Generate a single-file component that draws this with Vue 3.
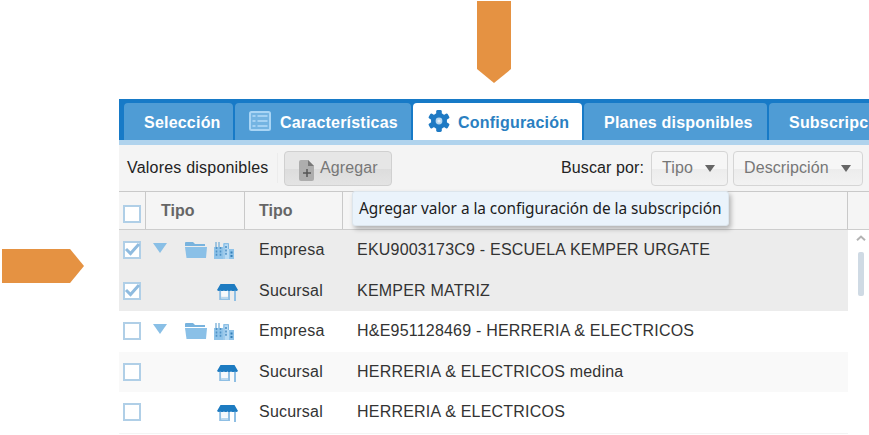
<template>
  <div class="page">
    <div class="arrow arrow-down"></div>
    <div class="arrow arrow-right"></div>

    <div class="panel">
      <nav class="tabs">
        <a v-for="tab in tabs" :key="tab.id" class="tab" :class="[tab.id, { active: tab.id === activeTab }]" @click="activeTab = tab.id">
          <svg v-if="tab.icon === 'list'" class="icon-list" viewBox="0 0 22 20">
            <rect x="1" y="1" width="20" height="18" rx="1.5" fill="#74b4e2" stroke="#a9d5f5" stroke-width="2" />
            <path d="M3.5 5H6.5M3.5 10H6.5M3.5 15H6.5M8.5 5H18.5M8.5 10H18.5M8.5 15H18.5" stroke="#a5d2f3" stroke-width="2" />
          </svg>
          <svg v-if="tab.icon === 'gear'" class="icon-gear" viewBox="0 0 22 22">
            <g fill="#1e7ac4">
              <circle cx="11" cy="11" r="8" />
              <rect v-for="n in 6" :key="n" x="8.2" y="0" width="5.6" height="6" rx="1.4" :transform="`rotate(${n * 60} 11 11)`" />
            </g>
            <circle cx="11" cy="11" r="3.4" fill="#b5d7f1" />
            <circle cx="11" cy="11" r="1.6" fill="#e3f0fa" />
          </svg>
          <span>{{ tab.label }}</span>
        </a>
      </nav>

      <div class="toolbar">
        <span class="toolbar-title">Valores disponibles</span>
        <button class="btn btn-add">
          <svg class="icon-add" viewBox="0 0 15 21">
            <path d="M0 2Q0 0 2 0H9L15 6V19Q15 21 13 21H2Q0 21 0 19Z" fill="#adadad" />
            <path d="M9 0L15 6H9Z" fill="#777" />
            <path d="M4 13H12M8 9V17" stroke="#555" stroke-width="1.5" />
          </svg>
          <span>Agregar</span>
        </button>
        <span class="search-label">Buscar por:</span>
        <button class="btn btn-type"><span>Tipo</span><i class="caret"></i></button>
        <button class="btn btn-description"><span>Descripción</span><i class="caret"></i></button>
        <div class="tooltip">Agregar valor a la configuración de la subscripción</div>
      </div>

      <div class="grid-head">
        <div class="cell check"><span class="checkbox"></span></div>
        <div class="cell tree">Tipo</div>
        <div class="cell kind">Tipo</div>
        <div class="cell name"></div>
      </div>

      <div class="grid-body">
        <div class="rows">
          <div v-for="row in rows" :key="row.id" class="row" :class="{ selected: row.checked, alt: row.id % 2 === 0 }">
            <div class="check">
              <span class="checkbox" @click="row.checked = !row.checked">
                <svg v-if="row.checked" viewBox="0 0 18 18"><path d="M3 8L7.5 12.5L16 3" fill="none" stroke="#8fbbdf" stroke-width="3" /></svg>
              </span>
            </div>
            <div class="tree">
              <template v-if="row.kind === 'Empresa'">
                <i class="expander"></i>
                <svg class="icon-folder" viewBox="0 0 22 16">
                  <path d="M0 1Q0 0 1 0H8L10 2H20V4H0Z" fill="#78b3de" />
                  <path d="M0 5H22L21 16H1.5Z" fill="#8ac0e7" />
                </svg>
                <svg class="icon-company" viewBox="0 0 21 17">
                  <path d="M0 5H9V17H0ZM14 7H20V17H14Z" fill="#8fc3e9" />
                  <path d="M9 1H15V17H9Z" fill="#b8dbf4" />
                  <path d="M10 17V1.7H14.5V7" fill="none" stroke="#83b9e1" stroke-width="1" />
                  <path d="M2 0V5M5 0V5" stroke="#77afd8" stroke-width="1.3" />
                  <path d="M2.5 5V14.5M6.5 5V14.5M12 4V14" stroke="#4f92c6" stroke-width="1.6" stroke-dasharray="2 1.4" />
                  <path d="M17.5 9.5V15" stroke="#357fb7" stroke-width="2" stroke-dasharray="2 1.5" />
                </svg>
              </template>
              <svg v-else class="icon-store" viewBox="0 0 21 17">
                <path d="M3.2 6V15H12V6M18 6V17" fill="none" stroke="#8fbfe4" stroke-width="2" />
                <path d="M4.2 13H11V15H4.2Z" fill="#b8d7ee" />
                <path d="M4.2 7H11V12.5H4.2Z" fill="#f5f9fc" />
                <path d="M3.5 0H17.5L21 6Q19.5 7.5 18 6.5Q16 7.5 14 6.5Q12 7.5 10.5 6.5Q8.5 7.5 7 6.5Q5 7.5 3.5 6.5Q1.5 7.5 0 6Z" fill="#1d7bc1" />
              </svg>
            </div>
            <div class="kind"><span>{{ row.kind }}</span></div>
            <div class="name">{{ row.name }}</div>
          </div>
        </div>
        <div class="scrollbar">
          <svg viewBox="0 0 10 6"><path d="M1 5.2L5 1.5L9 5.2" fill="none" stroke="#b3b3b3" stroke-width="2" /></svg>
          <div class="thumb"></div>
        </div>
      </div>
    </div>
  </div>
</template>

<script setup>
import { ref } from 'vue'

const activeTab = ref('configuracion')

const tabs = [
  { id: 'seleccion', label: 'Selección' },
  { id: 'caracteristicas', label: 'Características', icon: 'list' },
  { id: 'configuracion', label: 'Configuración', icon: 'gear' },
  { id: 'planes', label: 'Planes disponibles' },
  { id: 'subscripciones', label: 'Subscripc' },
]

const rows = ref([
  { id: 1, kind: 'Empresa', name: 'EKU9003173C9 - ESCUELA KEMPER URGATE', checked: true },
  { id: 2, kind: 'Sucursal', name: 'KEMPER MATRIZ', checked: true },
  { id: 3, kind: 'Empresa', name: 'H&E951128469 - HERRERIA & ELECTRICOS', checked: false },
  { id: 4, kind: 'Sucursal', name: 'HERRERIA & ELECTRICOS medina', checked: false },
  { id: 5, kind: 'Sucursal', name: 'HERRERIA & ELECTRICOS', checked: false },
])
</script>

<style>
body {
  background: #fff;
  overflow: hidden;
}
</style>

<style scoped>
* {
  box-sizing: border-box;
}

.page {
  position: relative;
  width: 869px;
  height: 435px;
  padding: 99px 0 0 119px;
  overflow: hidden;
  font: 16px 'Liberation Sans', Arial, sans-serif;
  letter-spacing: 0.21px;
  color: #333;
}

/* Callout arrows drawn over the page */
.arrow {
  position: absolute;
  background: #e59242;
}

.arrow-down {
  left: 477px;
  top: 1px;
  width: 34px;
  height: 82px;
  clip-path: polygon(0 0, 100% 0, 100% 83%, 50% 100%, 0 83%);
}

.arrow-right {
  left: 2px;
  top: 249px;
  width: 82px;
  height: 34px;
  clip-path: polygon(0 0, 83% 0, 100% 50%, 83% 100%, 0 100%);
}

.panel {
  width: 750px;
}

.tabs {
  display: flex;
  gap: 2px;
  height: 46px;
  padding: 4px 0 0 5px;
  background: #177ac7;
  border-bottom: 5px solid #b0d3ed;
  overflow: hidden;
}

.tab {
  display: flex;
  flex: none;
  align-items: center;
  height: 37px;
  padding-top: 2px;
  border-radius: 4px 4px 0 0;
  background: #4f9cd5;
  color: #fff;
  font-weight: bold;
  white-space: nowrap;
}

.tab.active {
  background: #fff;
  color: #2a7fc1;
}

.seleccion {
  width: 109px;
  padding-left: 20px;
}

.caracteristicas {
  width: 176px;
  padding-left: 14px;
}

.configuracion {
  width: 169px;
  padding-left: 15px;
}

.planes {
  width: 183px;
  padding-left: 20px;
}

.subscripciones {
  width: 180px;
  padding-left: 20px;
}

.icon-list {
  width: 22px;
  height: 20px;
  margin: -3px 9px 0 0;
}

.icon-gear {
  width: 22px;
  height: 22px;
  margin: -4px 8px 0 0;
}

.toolbar {
  position: relative;
  display: flex;
  align-items: center;
  height: 46px;
  padding: 0 6px 0 8px;
  background: #f4f4f4;
}

.toolbar-title {
  width: 151px;
  margin-right: 6px;
  border-right: 1px solid #ececec;
  color: #222;
  line-height: 30px;
}

.search-label {
  margin: 0 7px 0 auto;
  color: #222;
  letter-spacing: 0.1px;
}

.btn {
  display: flex;
  align-items: center;
  height: 35px;
  padding: 0;
  border: 1px solid #d5d5d5;
  border-radius: 4px;
  background: linear-gradient(#f6f6f6 50%, #ececec 50%, #f2f2f2);
  color: #777;
  font: inherit;
  letter-spacing: 0.1px;
}

.btn-add {
  width: 108px;
  padding-left: 14px;
  background: linear-gradient(#e6e6e6 50%, #dcdcdc 50%, #e4e4e4);
  border-color: #d0d0d0;
}

.btn-type {
  width: 77px;
  padding-left: 10px;
  margin-right: 5px;
}

.btn-description {
  width: 130px;
  padding-left: 10px;
}

.icon-add {
  width: 15px;
  height: 21px;
  margin: 5px 6px 0 0;
}

.caret {
  margin-left: 12px;
  border: 5px solid transparent;
  border-top: 7px solid #666;
  border-bottom: 0;
}

.tooltip {
  position: absolute;
  left: 233px;
  top: 46px;
  z-index: 2;
  width: 377px;
  height: 35px;
  padding-left: 6px;
  border: 1px solid #dce5ec;
  border-radius: 3px;
  background: #eaf3fb;
  box-shadow: 2px 3px 5px rgba(0, 0, 0, 0.28);
  color: #1c1c1c;
  font: 15.4px/33px 'Noto Sans', Tahoma, sans-serif;
  letter-spacing: -0.05px;
  white-space: nowrap;
}

.grid-head {
  display: flex;
  height: 39px;
  border-top: 1px solid #c9c9c9;
  border-bottom: 1px solid #cdcdcd;
  background: #f5f5f5;
  color: #666;
  font-weight: bold;
  letter-spacing: 0;
  line-height: 38px;
}

.cell {
  height: 37px;
  border-right: 1px solid #c9c9c9;
}

.check {
  display: flex;
  flex: none;
  align-items: center;
  width: 27px;
  padding-left: 4px;
}

.checkbox {
  width: 18px;
  height: 18px;
  border: 2px solid #b0cfe7;
  background: #fff;
}

.grid-head .checkbox {
  margin-top: 6px;
}

.checkbox svg {
  display: block;
  width: 18px;
  height: 18px;
  margin: -2px;
}

.tree {
  flex: none;
  width: 99px;
}

.cell.tree {
  padding-left: 15px;
}

.kind {
  flex: none;
  width: 98px;
  padding-left: 14px;
}

.cell.name {
  width: 505px;
}

.grid-body {
  display: flex;
}

.rows {
  width: 729px;
  border-bottom: 1px solid #f4f4f4;
}

.row {
  display: flex;
  height: 40.5px;
  align-items: center;
}

.row.alt {
  background: #f9f9f9;
}

.row.selected {
  background: #ececec;
}

.row .tree {
  display: flex;
  align-items: center;
  padding-left: 7px;
}

.row .name {
  padding-left: 14px;
  white-space: nowrap;
}

.expander {
  margin: -4px 18px 0 0;
  border: 7px solid transparent;
  border-top: 10px solid #89bfe6;
  border-bottom: 0;
}

.icon-folder {
  width: 22px;
  height: 16px;
  margin-right: 7px;
}

.icon-company {
  width: 21px;
  height: 17px;
}

.icon-store {
  width: 21px;
  height: 17px;
  margin: 3px 0 0 64px;
}

.scrollbar {
  display: flex;
  flex-direction: column;
  align-items: center;
  width: 21px;
  padding: 5px 0 0 5px;
}

.scrollbar svg {
  width: 10px;
  height: 6px;
}

.thumb {
  width: 6px;
  height: 44px;
  margin-top: 11px;
  border-radius: 2px;
  background: #cfdae4;
}
</style>
